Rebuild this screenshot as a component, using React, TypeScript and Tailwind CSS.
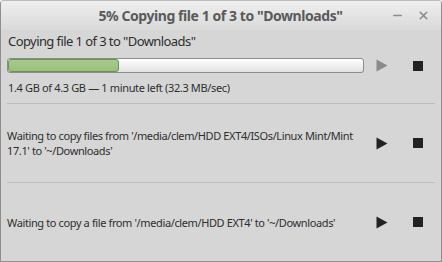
import { Minus, X } from 'lucide-react'

const font = { fontFamily: '"Noto Sans", "DejaVu Sans", sans-serif' }

function PlayIcon({ color }: { color: string }) {
  return (
    <svg width="12" height="13" viewBox="0 0 12 13">
      <path d="M0.5 0.5 L11.5 6.5 L0.5 12.5 Z" fill={color} />
    </svg>
  )
}

function StopIcon() {
  return <div className="w-[10px] h-[10px] bg-[#222222]" />
}

function Controls({ disabled }: { disabled?: boolean }) {
  return (
    <div className="flex items-center shrink-0">
      <div className="w-9 flex justify-center">
        <PlayIcon color={disabled ? '#8a8a8a' : '#222222'} />
      </div>
      <div className="w-9 flex justify-center">
        <StopIcon />
      </div>
    </div>
  )
}

export default function App() {
  return (
    <div
      className="w-[442px] h-[262px] flex flex-col bg-[#d6d6d6] border-x border-b border-[#8e8e8e] rounded-t-[4px] overflow-hidden text-[#333333]"
      style={font}
    >
      {/* Title bar */}
      <div className="h-[30px] shrink-0 relative flex items-center justify-center bg-gradient-to-b from-[#efefef] to-[#d9d9d9] border-t border-[#bdbdbd]">
        <span className="text-[14px] font-bold text-[#5a5a5a] tracking-[-0.43px] -ml-[1px]">5% Copying file 1 of 3 to "Downloads"</span>
        <div className="absolute right-[11px] top-0 h-full flex items-center gap-[13px] text-[#8c8c8c]">
          <Minus size={13} strokeWidth={2.5} />
          <X size={13} strokeWidth={3} />
        </div>
      </div>

      {/* Active copy */}
      <div className="flex flex-col pl-[6px] pr-[5px]">
        <div className="text-[13px] leading-[18px] pt-[2px] pl-px text-[#2e2e2e] tracking-[-0.58px]">Copying file 1 of 3 to "Downloads"</div>
        <div className="flex items-center mt-[8px]">
          <div className="flex-1 h-[15px] rounded-[3px] border border-[#8c8c8c] bg-gradient-to-b from-[#ffffff] to-[#e2e2e2] overflow-hidden">
            <div className="h-full w-[111px] rounded-[3px] border border-[#6b9452] bg-gradient-to-b from-[#a9c98f] to-[#9bbf7d]" />
          </div>
          <Controls disabled />
        </div>
        <div className="text-[11px] leading-[15px] mt-[7px] pl-px text-[#2e2e2e] tracking-[-0.35px]">
          1.4 GB of 4.3 GB — 1 minute left (32.3 MB/sec)
        </div>
        <div className="h-px bg-[#bcbcbc] mt-[8px] mr-[1px]" />
      </div>

      {/* Queued 1 */}
      <div className="flex flex-col pl-[6px] pr-[5px] flex-1">
        <div className="flex-1 flex items-center">
          <div className="flex-1 min-w-0 text-[11px] leading-[15px] text-[#2e2e2e] tracking-[-0.38px] whitespace-nowrap">
            Waiting to copy files from '/media/clem/HDD EXT4/ISOs/Linux Mint/Mint
            <br />
            17.1' to '~/Downloads'
          </div>
          <Controls />
        </div>
        <div className="h-px bg-[#bcbcbc] mr-[1px]" />
      </div>

      {/* Queued 2 */}
      <div className="flex items-center pl-[6px] pr-[5px] h-[78px]">
        <div className="flex-1 min-w-0 text-[11px] leading-[15px] text-[#2e2e2e] tracking-[-0.38px]">
          Waiting to copy a file from '/media/clem/HDD EXT4' to '~/Downloads'
        </div>
        <Controls />
      </div>
    </div>
  )
}
